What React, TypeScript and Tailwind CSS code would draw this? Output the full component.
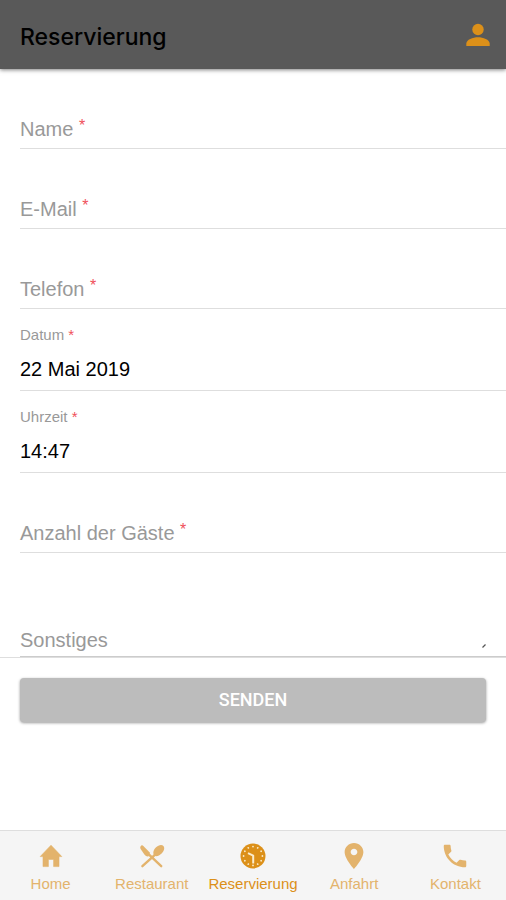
import React from 'react';
import { IoMdCall, IoMdPin } from 'react-icons/io';

const PersonIcon: React.FC = () => (
  <svg viewBox="0 0 24 24" className="h-6 w-6" fill="currentColor" aria-hidden="true">
    <circle cx="12" cy="6.5" r="5.7" />
    <path d="M0.3 23 V20.6 C0.3 16.6 7 14.2 12 14.2 C17 14.2 23.7 16.6 23.7 20.6 V23 Z" />
  </svg>
);

const HomeIcon: React.FC = () => (
  <svg viewBox="0 0 24 24" className="h-6 w-6" fill="currentColor" aria-hidden="true">
    <path d="M12 1.2 L1.2 12.6 H4 V22.6 H9.4 V15.4 H14.6 V22.6 H20 V12.6 H22.8 Z" stroke="currentColor" strokeWidth="0.6" strokeLinejoin="round" />
  </svg>
);

const RestaurantIcon: React.FC = () => (
  <svg viewBox="0 0 26 24" className="h-6 w-[26px]" fill="currentColor" aria-hidden="true">
    <path d="M1.6 2.2 C2.4 1 3.6 1.2 4.6 2.2 L11 8.8 L9.4 12.4 C8 12.8 6.6 12 5.4 10.6 L2 5.6 C1.2 4.4 1 3.2 1.6 2.2 Z" />
    <path d="M15.4 11.6 C13.6 9.6 14.2 6.2 16.8 3.6 C19.4 1 22.8 0.4 24.4 2 C26 3.6 25.2 7 22.6 9.6 C20.2 12 17.2 12.8 15.4 11.6 Z" />
    <path d="M17 9.8 L3.4 22.2 M9 9.6 L22.2 22.2" fill="none" stroke="currentColor" strokeWidth="2.4" strokeLinecap="round" />
  </svg>
);

const ClockIcon: React.FC = () => {
  const hours = Array.from({ length: 12 }, (_, i) => i * 30);

  return (
    <svg viewBox="0 0 26 26" className="h-[26px] w-[26px]" aria-hidden="true">
      <circle cx="13" cy="13" r="12.5" fill="currentColor" />
      {hours.map((angle) => (
        <circle key={angle} cx="13" cy="3.6" r="0.9" fill="#fbeccd" transform={`rotate(${angle} 13 13)`} />
      ))}
      <path d="M8 10.2 L13.2 12.6 V20.5" fill="none" stroke="#fbeccd" strokeWidth="2" strokeLinejoin="round" />
    </svg>
  );
};

const textFields = [
  { id: 'name', label: 'Name', type: 'text' },
  { id: 'email', label: 'E-Mail', type: 'email' },
  { id: 'phone', label: 'Telefon', type: 'tel' },
];

const pickerFields = [
  { id: 'date', label: 'Datum', value: '22 Mai 2019' },
  { id: 'time', label: 'Uhrzeit', value: '14:47' },
];

const tabs = [
  { label: 'Home', icon: <HomeIcon /> },
  { label: 'Restaurant', icon: <RestaurantIcon /> },
  { label: 'Reservierung', icon: <ClockIcon />, active: true },
  { label: 'Anfahrt', icon: <IoMdPin className="h-[30px] w-[30px]" /> },
  { label: 'Kontakt', icon: <IoMdCall className="h-[30px] w-[30px]" /> },
];

const TextField: React.FC<{ id: string; label: string; type: string }> = ({ id, label, type }) => (
  <div className="flex h-20 items-end gap-2 border-b border-[#dedede] pb-[7px]">
    <label htmlFor={id} className="text-xl leading-6 whitespace-pre text-[#999999]">
      {label} <span className="align-text-top text-base leading-4 text-[#f0505a]">*</span>
    </label>
    <input id={id} type={type} required className="h-6 min-w-0 flex-1 bg-transparent text-xl text-black outline-none" />
  </div>
);

export default function App() {
  return (
    <div className="flex min-h-screen flex-col bg-white font-['Liberation_Sans',Arial,sans-serif]">
      <header className="flex h-[69px] items-center justify-between bg-[#595959] pt-1 pr-4 pl-5 shadow-[0_1px_4px_rgba(0,0,0,0.5)]">
        <h1 className="pt-0.5 font-['Inter',sans-serif] text-[23px] font-medium text-black">Reservierung</h1>
        <button type="button" aria-label="Profil" className="pb-1 text-[#dc9019]">
          <PersonIcon />
        </button>
      </header>

      <form className="flex-1" onSubmit={(e) => e.preventDefault()}>
        <div className="pl-5">
          {textFields.map((field) => (
            <TextField key={field.id} {...field} />
          ))}
          {pickerFields.map((field) => (
            <div key={field.id} className="flex h-[82px] flex-col justify-end border-b border-[#dedede] pb-[7px]">
              <label htmlFor={field.id} className="text-[15px] leading-5 whitespace-pre text-[#999999]">
                {field.label} <span className="text-[#f0505a]">*</span>
              </label>
              <input
                id={field.id}
                type="text"
                required
                defaultValue={field.value}
                className="mt-2.5 h-7 w-full bg-transparent text-xl text-black outline-none"
              />
            </div>
          ))}
          <TextField id="guests" label="Anzahl der Gäste" type="number" />
        </div>

        <div className="border-b border-[#dedede] pl-5">
          <div className="flex h-[104px] items-end gap-2 border-b border-[#cccccc] pr-5 pb-1">
            <label htmlFor="notes" className="text-xl leading-6 text-[#999999]">
              Sonstiges
            </label>
            <textarea
              id="notes"
              rows={1}
              className="h-6 min-w-0 flex-1 resize-none bg-transparent text-xl leading-6 text-black outline-none"
            />
            <svg viewBox="0 0 4 4" className="mb-1 h-1 w-1" aria-hidden="true">
              <path d="M0.5 3.5 L3.5 0.5" stroke="#555555" strokeWidth="1.2" />
            </svg>
          </div>
        </div>

        <div className="px-5 pt-5">
          <button
            type="submit"
            className="h-11 w-full rounded-sm bg-[#bcbcbc] font-['Roboto',sans-serif] text-lg font-medium text-white shadow-[0_1px_3px_rgba(0,0,0,0.4)]"
          >
            SENDEN
          </button>
        </div>
      </form>

      <nav className="grid h-[70px] grid-cols-5 border-t border-[#dedede] bg-[#f5f5f5]">
        {tabs.map((tab) => (
          <a
            key={tab.label}
            href="#"
            aria-current={tab.active ? 'page' : undefined}
            className={
              tab.active
                ? 'flex flex-col items-center justify-end pb-1 text-[15px] leading-6 text-[#dc9019]'
                : 'flex flex-col items-center justify-end pb-1 text-[15px] leading-6 text-[#e3b36c]'
            }
          >
            <span className="flex h-8 items-center">{tab.icon}</span>
            <span>{tab.label}</span>
          </a>
        ))}
      </nav>
    </div>
  );
}
